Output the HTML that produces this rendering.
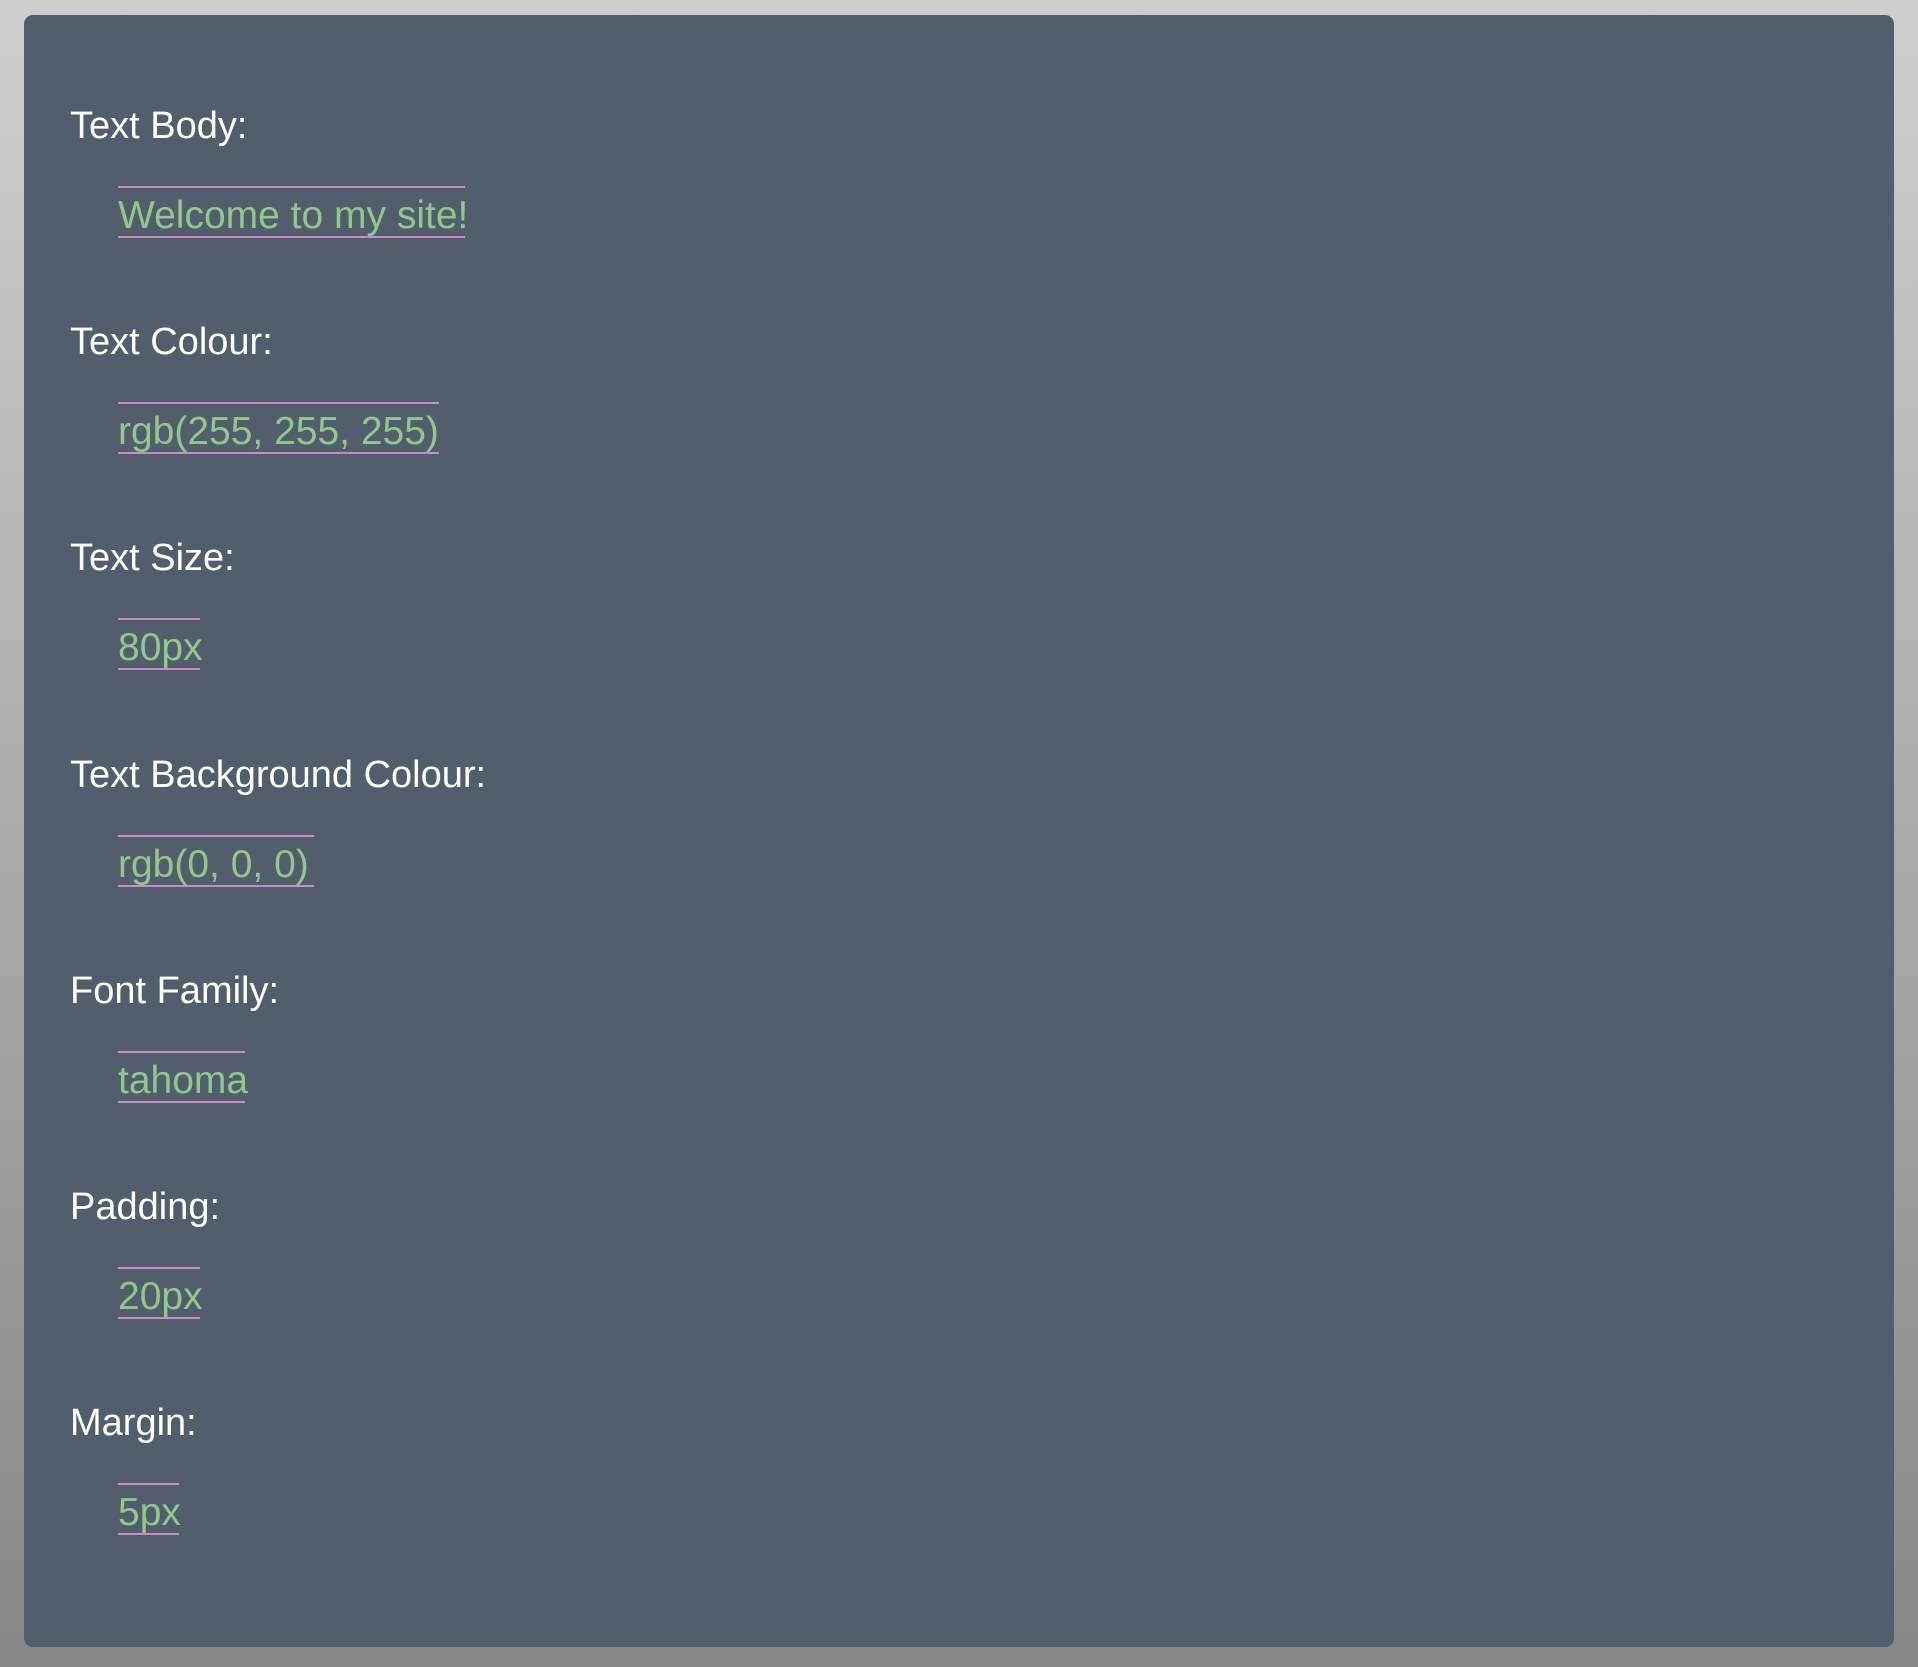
<!DOCTYPE html>
<html><head><style>
html,body{margin:0;padding:0;}
body{width:1918px;height:1667px;background:linear-gradient(#cfcfcf,#878787);position:relative;overflow:hidden;font-family:"Liberation Sans","DejaVu Sans",sans-serif;}
.panel{position:absolute;left:24px;top:15px;width:1870px;height:1632px;background:#525e6b;border-radius:9px;}
.l{position:absolute;left:70px;color:#fff;font-size:38px;line-height:48px;white-space:nowrap;}
.v{position:absolute;left:118px;color:#8fc78f;font-size:39px;line-height:45px;padding-top:5px;height:43px;border-top:2px solid #c88cc8;border-bottom:2px solid #c88cc8;white-space:nowrap;overflow:visible;}
</style></head><body>
<div class="panel"></div>
<div class="l" style="top:102px">Text Body:</div>
<div class="v" style="top:186px;width:347px">Welcome to my site!</div>
<div class="l" style="top:318px">Text Colour:</div>
<div class="v" style="top:402px;width:321px">rgb(255, 255, 255)</div>
<div class="l" style="top:534px">Text Size:</div>
<div class="v" style="top:618px;width:82px">80px</div>
<div class="l" style="top:751px">Text Background Colour:</div>
<div class="v" style="top:835px;width:196px">rgb(0, 0, 0)</div>
<div class="l" style="top:967px">Font Family:</div>
<div class="v" style="top:1051px;width:127px">tahoma</div>
<div class="l" style="top:1183px">Padding:</div>
<div class="v" style="top:1267px;width:82px">20px</div>
<div class="l" style="top:1399px">Margin:</div>
<div class="v" style="top:1483px;width:61px">5px</div>
</body></html>
